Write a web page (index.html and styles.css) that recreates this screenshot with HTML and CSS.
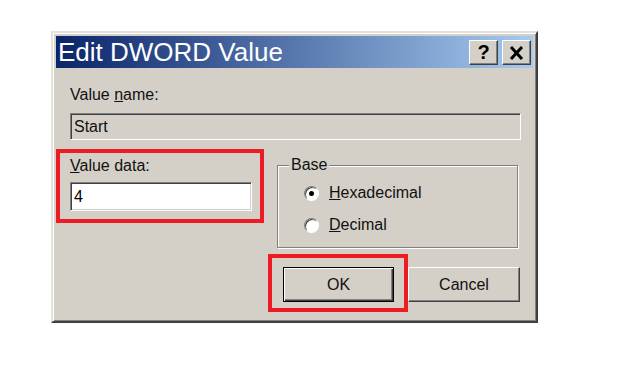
FILE: index.html
```html
<!DOCTYPE html>
<html lang="en">
<head>
    <meta charset="UTF-8">
    <title>Edit DWORD Value</title>
    <link rel="stylesheet" href="styles.css">
</head>
<body>
    <div class="dialog">
        <div class="titlebar">
            <span class="title">Edit DWORD Value</span>
            <div class="title-buttons">
                <span class="tbtn help">?</span>
                <span class="tbtn close">
                    <svg width="15" height="14" viewBox="0 0 15 14">
                        <path d="M2 1 L13 13 M13 1 L2 13" stroke="#000" stroke-width="3" fill="none"/>
                    </svg>
                </span>
            </div>
        </div>

        <div class="client">
            <div class="label">Value <u>n</u>ame:</div>
            <div class="field field-name">Start</div>

            <div class="lower">
                <div class="highlight data-box">
                    <div class="label"><u>V</u>alue data:</div>
                    <div class="field field-data">4</div>
                </div>

                <fieldset class="group">
                    <legend>Base</legend>
                    <div class="radio-row">
                        <span class="radio checked"></span>
                        <span><u>H</u>exadecimal</span>
                    </div>
                    <div class="radio-row">
                        <span class="radio"></span>
                        <span><u>D</u>ecimal</span>
                    </div>
                </fieldset>
            </div>

            <div class="buttons">
                <div class="highlight ok-box">
                    <button class="btn default">OK</button>
                </div>
                <button class="btn cancel">Cancel</button>
            </div>
        </div>
    </div>
</body>
</html>
```

FILE: styles.css
```css
body {
    margin: 0;
    background: #fff;
    font-family: "Liberation Sans", Arial, sans-serif;
    font-size: 16px;
    color: #111;
}
.dialog {
    box-sizing: border-box;
    width: 487px;
    margin: 31px 0 0 51px;
    padding: 3px;
    background: #d4d0c8;
    border: 2px solid;
    border-color: #e4e2dc #404040 #404040 #e4e2dc;
    box-shadow: inset 1px 1px 0 #fff, inset -1px -1px 0 #808080;
}
.titlebar {
    height: 32px;
    display: flex;
    align-items: center;
    justify-content: space-between;
    padding: 0 2px;
    background: linear-gradient(to right, #0a246a, #a6caf0);
}
.title {
    color: #fff;
    font-size: 26px;
    line-height: 32px;
}
.title-buttons {
    display: flex;
    gap: 4px;
    margin-top: 1px;
}
.tbtn {
    box-sizing: border-box;
    width: 29px;
    height: 25px;
    display: flex;
    align-items: center;
    justify-content: center;
    background: #d4d0c8;
    border: 1px solid;
    border-color: #fff #404040 #404040 #fff;
    box-shadow: inset -1px -1px 0 #808080;
}
.help {
    font-weight: bold;
    font-size: 20px;
    color: #000;
}
.client {
    padding: 18px 12px 6px 14px;
}
.label {
    line-height: 18px;
}
.field {
    box-sizing: border-box;
    border: 1px solid;
    border-color: #808080 #fff #fff #808080;
    box-shadow: inset 1px 1px 0 #404040, inset -1px -1px 0 #d4d0c8;
    padding: 0 3px;
}
.field-name {
    height: 27px;
    line-height: 25px;
    margin-top: 9px;
}
.field-data {
    height: 29px;
    line-height: 27px;
    margin-top: 7px;
    background: #fff;
    color: #000;
}
.lower {
    display: flex;
    align-items: flex-start;
    gap: 13px;
    margin: 9px 0 0 -14px;
}
.highlight {
    border: 4px solid #ed1c24;
    box-sizing: border-box;
}
.data-box {
    width: 208px;
    height: 74px;
    padding: 4px 8px 8px 10px;
}
.group {
    box-sizing: border-box;
    width: 241px;
    height: 92px;
    margin: 7px 0 0 0;
    padding: 10px 0 0 26px;
    border: 1px solid #808080;
    box-shadow: 1px 1px 0 #fff, inset 1px 1px 0 #fff;
}
.group legend {
    padding: 0 2px;
    margin-left: -15px;
    line-height: 18px;
    background: #d4d0c8;
}
.radio-row {
    display: flex;
    align-items: center;
    height: 18px;
    margin-bottom: 14px;
}
.radio {
    box-sizing: border-box;
    width: 15px;
    height: 15px;
    margin-right: 10px;
    border-radius: 50%;
    background: #fff;
    border: 1px solid;
    border-color: #808080 #fff #fff #808080;
    box-shadow: inset 1px 1px 0 #404040;
    display: flex;
    align-items: center;
    justify-content: center;
}
.radio.checked::after {
    content: "";
    width: 5px;
    height: 5px;
    border-radius: 50%;
    background: #000;
}
.buttons {
    display: flex;
    align-items: flex-start;
    justify-content: flex-end;
    margin: 6px 1px 0 0;
}
.ok-box {
    padding: 9px 10px 6px 11px;
}
.btn {
    box-sizing: border-box;
    height: 35px;
    font-family: "Liberation Sans", Arial, sans-serif;
    font-size: 16px;
    color: #111;
    background: #d4d0c8;
    padding: 0;
}
.default {
    width: 111px;
    border: 1px solid #000;
    box-shadow: inset 1px 1px 0 #fff, inset -1px -1px 0 #404040, inset -2px -2px 0 #808080;
}
.cancel {
    width: 112px;
    margin-top: 13px;
    border: 1px solid;
    border-color: #fff #404040 #404040 #fff;
    box-shadow: inset -1px -1px 0 #808080;
}
```
